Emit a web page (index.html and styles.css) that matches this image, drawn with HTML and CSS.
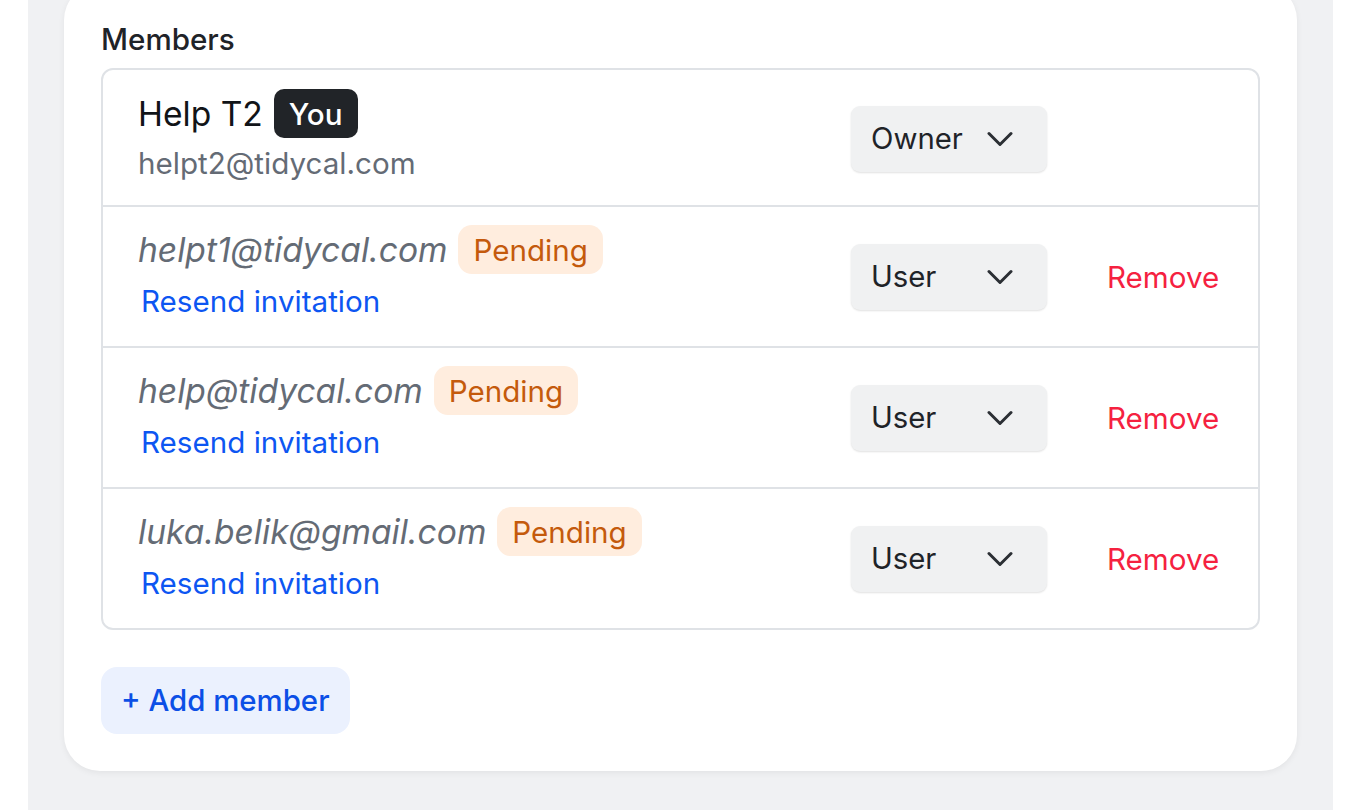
FILE: index.html
```html
<!DOCTYPE html>
<html lang="en">
<head>
  <meta charset="UTF-8" />
  <meta name="viewport" content="width=device-width, initial-scale=1.0" />
  <title>Team members</title>
  <link rel="stylesheet" href="styles.css">
</head>
<body>
  <div class="page">
    <div class="card">
      <h2 class="section-title">Members</h2>

      <div class="member-list">
        <div class="member-row">
          <div class="member-info">
            <div class="member-line">
              <span class="member-name">Help T2</span>
              <span class="badge badge-you">You</span>
            </div>
            <div class="member-email">helpt2@tidycal.com</div>
          </div>
          <button class="role-select">
            <span>Owner</span>
            <svg class="chevron" viewBox="0 0 26 16" width="26" height="16"><path d="M2 2.5l11 11 11-11" fill="none" stroke="currentColor" stroke-width="3" stroke-linecap="round" stroke-linejoin="round"/></svg>
          </button>
          <span class="remove-slot"></span>
        </div>

        <div class="member-row">
          <div class="member-info">
            <div class="member-line">
              <span class="invite-email">helpt1@tidycal.com</span>
              <span class="badge badge-pending">Pending</span>
            </div>
            <a href="#" class="resend-link">Resend invitation</a>
          </div>
          <button class="role-select">
            <span>User</span>
            <svg class="chevron" viewBox="0 0 26 16" width="26" height="16"><path d="M2 2.5l11 11 11-11" fill="none" stroke="currentColor" stroke-width="3" stroke-linecap="round" stroke-linejoin="round"/></svg>
          </button>
          <a href="#" class="remove-link">Remove</a>
        </div>

        <div class="member-row">
          <div class="member-info">
            <div class="member-line">
              <span class="invite-email">help@tidycal.com</span>
              <span class="badge badge-pending">Pending</span>
            </div>
            <a href="#" class="resend-link">Resend invitation</a>
          </div>
          <button class="role-select">
            <span>User</span>
            <svg class="chevron" viewBox="0 0 26 16" width="26" height="16"><path d="M2 2.5l11 11 11-11" fill="none" stroke="currentColor" stroke-width="3" stroke-linecap="round" stroke-linejoin="round"/></svg>
          </button>
          <a href="#" class="remove-link">Remove</a>
        </div>

        <div class="member-row">
          <div class="member-info">
            <div class="member-line">
              <span class="invite-email">luka.belik@gmail.com</span>
              <span class="badge badge-pending">Pending</span>
            </div>
            <a href="#" class="resend-link">Resend invitation</a>
          </div>
          <button class="role-select">
            <span>User</span>
            <svg class="chevron" viewBox="0 0 26 16" width="26" height="16"><path d="M2 2.5l11 11 11-11" fill="none" stroke="currentColor" stroke-width="3" stroke-linecap="round" stroke-linejoin="round"/></svg>
          </button>
          <a href="#" class="remove-link">Remove</a>
        </div>
      </div>

      <button class="add-member">+ Add member</button>
    </div>
  </div>
</body>
</html>
```

FILE: styles.css
```css
html, body {
  margin: 0;
  padding: 0;
  background: #fff;
}
body {
  font-family: Inter, "Noto Sans", sans-serif;
  color: #1f2328;
  height: 810px;
  overflow: hidden;
}
.page {
  margin: 0 27px 0 28px;
  padding: 0 36px 40px;
  background: #f0f1f3;
  min-height: 810px;
  box-sizing: border-box;
}
.card {
  margin-top: -16px;
  padding: 37px 37px 37px;
  background: #fff;
  border-radius: 36px;
  box-shadow: 0 2px 6px rgba(0,0,0,0.06);
}
.section-title {
  margin: 0 0 11px;
  font-size: 29.6px;
  font-weight: 500;
  line-height: 36px;
  color: #1f2328;
}
.member-list {
  border: 2px solid #dfe2e6;
  border-radius: 12px;
}
.member-row {
  display: flex;
  align-items: center;
  padding: 18px 39px 18px 35px;
  border-top: 2px solid #dfe2e6;
}
.member-row:first-child {
  padding-top: 19px;
  padding-bottom: 17px;
  border-top: none;
}
.member-info {
  flex: 1;
  display: flex;
  flex-direction: column;
  align-items: flex-start;
}
.member-line {
  display: flex;
  align-items: center;
  gap: 11px;
  height: 49px;
}
.member-name {
  font-size: 33.6px;
  color: #111418;
}
.member-email {
  font-size: 29.6px;
  line-height: 50px;
  color: #646b75;
}
.invite-email {
  font-size: 33.6px;
  font-style: italic;
  color: #646b75;
}
.badge {
  display: inline-flex;
  align-items: center;
  height: 49px;
  box-sizing: border-box;
  font-size: 29.6px;
}
.badge-you {
  padding: 0 15px;
  background: #212428;
  color: #fff;
  border-radius: 10px;
  font-weight: 500;
}
.badge-pending {
  padding: 0 15px;
  background: #ffedde;
  color: #c45a0c;
  border-radius: 14px;
}
.resend-link {
  font-size: 29.6px;
  line-height: 54px;
  color: #0d56f2;
  text-decoration: none;
  margin-left: 3px;
}
.role-select {
  display: flex;
  align-items: center;
  justify-content: space-between;
  width: 196px;
  height: 66px;
  padding: 0 34px 0 20px;
  box-sizing: border-box;
  background: #f0f1f2;
  border: none;
  border-radius: 9px;
  box-shadow: 0 1px 2px rgba(0,0,0,0.12);
  font-family: inherit;
  font-size: 29.3px;
  color: #1f2328;
}
.chevron {
  color: #2b2f34;
}
.remove-slot,
.remove-link {
  width: 112px;
  margin-left: 60px;
}
.remove-link {
  font-size: 29.6px;
  color: #f5213f;
  text-decoration: none;
  white-space: nowrap;
}
.add-member {
  margin-top: 37px;
  height: 67px;
  padding: 0 20px;
  background: #ebf1fe;
  border: none;
  border-radius: 16px;
  font-family: inherit;
  font-size: 29.4px;
  font-weight: 500;
  color: #0b4fe6;
}
```
